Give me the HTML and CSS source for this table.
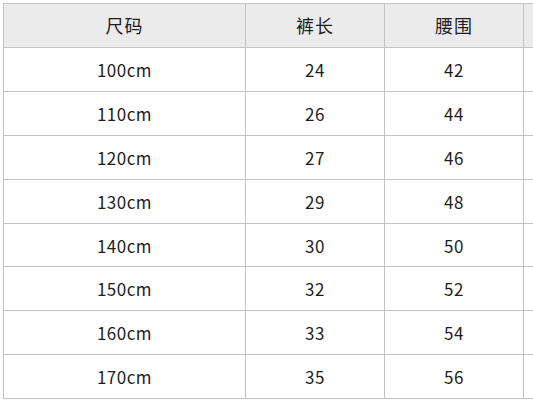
FILE: index.html
```html
<!DOCTYPE html>
<html lang="zh">
<head>
<meta charset="utf-8">
<link rel="stylesheet" href="styles.css">
</head>
<body>
<div class="wrap">
<table class="size-table">
<thead>
<tr><th class="c1">尺码</th><th class="c2">裤长</th><th class="c3">腰围</th><th class="c4"></th></tr>
</thead>
<tbody>
<tr><td>100cm</td><td>24</td><td>42</td><td></td></tr>
<tr><td>110cm</td><td>26</td><td>44</td><td></td></tr>
<tr><td>120cm</td><td>27</td><td>46</td><td></td></tr>
<tr><td>130cm</td><td>29</td><td>48</td><td></td></tr>
<tr><td>140cm</td><td>30</td><td>50</td><td></td></tr>
<tr><td>150cm</td><td>32</td><td>52</td><td></td></tr>
<tr><td>160cm</td><td>33</td><td>54</td><td></td></tr>
<tr><td>170cm</td><td>35</td><td>56</td><td></td></tr>
</tbody>
</table>
</div>
</body>
</html>
```
FILE: styles.css
```css
html, body {
  margin: 0;
  padding: 0;
  background: #ffffff;
  overflow: hidden;
  width: 533px;
  height: 409px;
}
.wrap {
  padding: 3px 0 0 3px;
}
.size-table {
  border-collapse: collapse;
  table-layout: fixed;
  width: 660px;
  font-family: "Noto Sans CJK SC", "Noto Sans", sans-serif;
  color: #1e1e1e;
}
.size-table th,
.size-table td {
  border: 1px solid #c2c2c2;
  text-align: center;
  padding: 0;
  box-sizing: border-box;
}
.size-table th {
  background: #ebebeb;
  font-weight: 400;
  font-size: 18px;
  height: 44px;
  letter-spacing: 1px;
  padding-bottom: 1px;
}
.size-table td {
  height: 43.9px;
  font-size: 17px;
  font-weight: 400;
  letter-spacing: 0.5px;
}
.c1 { width: 242px; }
.c2 { width: 139px; }
.c3 { width: 139px; }
.c4 { width: 140px; }
```
